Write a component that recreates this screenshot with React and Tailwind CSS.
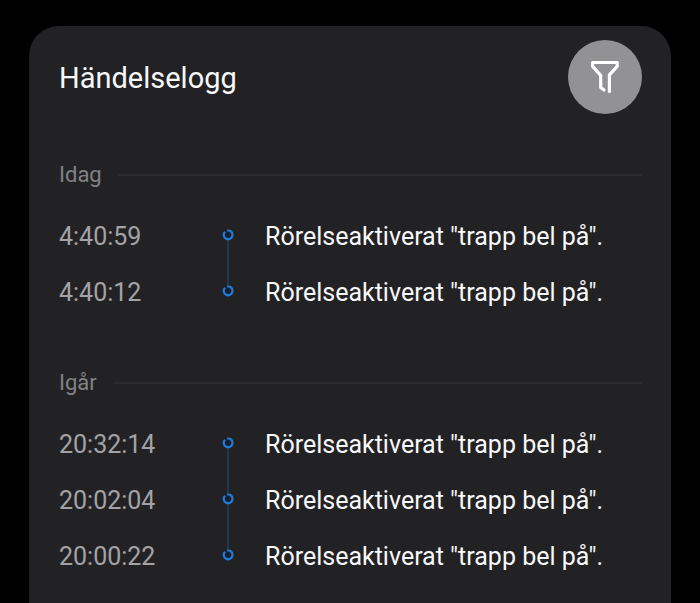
import React from 'react';

const sections = [
    {
        label: 'Idag',
        events: [
            { time: '4:40:59', text: 'Rörelseaktiverat "trapp bel på".' },
            { time: '4:40:12', text: 'Rörelseaktiverat "trapp bel på".' },
        ],
    },
    {
        label: 'Igår',
        events: [
            { time: '20:32:14', text: 'Rörelseaktiverat "trapp bel på".' },
            { time: '20:02:04', text: 'Rörelseaktiverat "trapp bel på".' },
            { time: '20:00:22', text: 'Rörelseaktiverat "trapp bel på".' },
        ],
    },
];

function FilterIcon() {
    return (
        <svg width="30" height="34" viewBox="0 0 30 34" fill="none" stroke="#ffffff" strokeWidth="3.2" strokeLinecap="round" strokeLinejoin="round" aria-hidden="true">
            <path d="M14 30L10.7 27.4V15.3L2.6 6.4V2.5H27.2V6.4L19.4 14.8V31.4" />
        </svg>
    );
}

// Open ring with its gap at the upper left
function TimelineDot() {
    return (
        <svg className="shrink-0" width="12" height="12" viewBox="0 0 12 12" fill="none" aria-hidden="true">
            <circle cx="6" cy="6" r="4.4" fill="#17202c" />
            <path d="M5.2 1.6A4.4 4.4 0 1 1 3.1 2.7" stroke="#1f7dd8" strokeWidth="2.2" />
        </svg>
    );
}

function EventRow({ event, first, last }) {
    return (
        <li className="flex h-14 items-center text-[25px] leading-8">
            <time className="w-[163px] shrink-0 text-[#a3a3a5]">{event.time}</time>
            <div className="-mt-1 flex w-3 shrink-0 flex-col items-center self-stretch">
                <span className={first ? 'w-[2px] flex-1' : 'w-[2px] flex-1 bg-[#1d3850]'}></span>
                <TimelineDot />
                <span className={last ? 'w-[2px] flex-1' : 'w-[2px] flex-1 bg-[#1d3850]'}></span>
            </div>
            <p className="ml-[31px] whitespace-nowrap text-[#f8f8f8]">{event.text}</p>
        </li>
    );
}

export default function App() {
    return (
        <div className="flex min-h-screen flex-col bg-black px-[29px] pt-[26px] font-['Roboto',sans-serif]">
            <main className="flex-1 rounded-t-[30px] bg-[#222224] pt-[14px] pr-[29px] pl-[30px]">
                {/* Header */}
                <header className="flex items-center justify-between">
                    <h1 className="pt-[2px] text-[29px] leading-9 text-[#f8f8f8]">Händelselogg</h1>
                    <button type="button" aria-label="Filtrera" className="flex size-[74px] items-center justify-center rounded-full bg-[#929294]">
                        <FilterIcon />
                    </button>
                </header>

                {/* Event log, grouped by day */}
                <div className="mt-[47px] flex flex-col gap-12">
                    {sections.map((section) => (
                        <section key={section.label}>
                            <div className="mb-5 flex items-center gap-4">
                                <h2 className="text-[22px] leading-7 text-[#828284]">{section.label}</h2>
                                <div className="h-[2px] flex-1 bg-[#2b2b2d]"></div>
                            </div>
                            <ol>
                                {section.events.map((event, idx) => (
                                    <EventRow
                                        key={event.time}
                                        event={event}
                                        first={idx === 0}
                                        last={idx === section.events.length - 1}
                                    />
                                ))}
                            </ol>
                        </section>
                    ))}
                </div>
            </main>
        </div>
    );
}
